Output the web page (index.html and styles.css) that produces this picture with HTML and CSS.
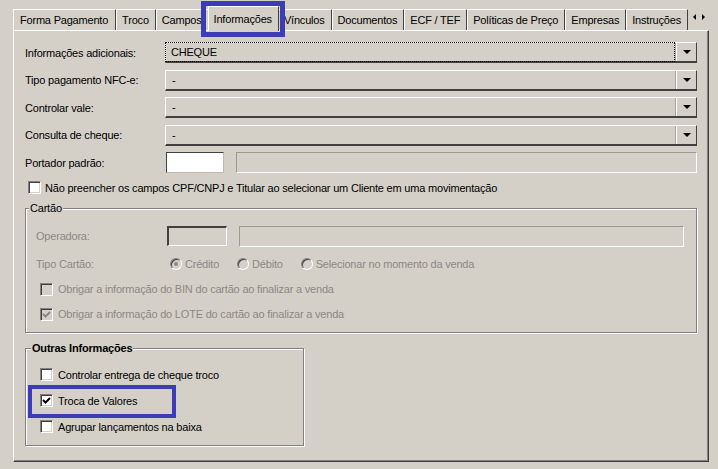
FILE: index.html
```html
<!DOCTYPE html>
<html lang="pt-BR">
<head>
    <meta charset="UTF-8">
    <title>Informações</title>
    <link rel="stylesheet" href="styles.css">
</head>
<body>
<div class="janela">
    <div class="abas">
        <div class="aba">Forma Pagamento</div>
        <div class="aba">Troco</div>
        <div class="aba">Campos</div>
        <div class="aba ativa">Informações</div>
        <div class="aba">Vínculos</div>
        <div class="aba">Documentos</div>
        <div class="aba">ECF / TEF</div>
        <div class="aba">Políticas de Preço</div>
        <div class="aba">Empresas</div>
        <div class="aba">Instruções</div>
        <div class="setas"><span class="seta esq"></span><span class="seta dir"></span></div>
    </div>

    <div class="painel">
        <div class="linhas">
            <div class="linha">
                <label class="rotulo">Informações adicionais:</label>
                <div class="combo foco"><span class="combo-texto">CHEQUE</span><span class="combo-botao"></span></div>
            </div>
            <div class="linha">
                <label class="rotulo">Tipo pagamento NFC-e:</label>
                <div class="combo"><span class="combo-texto">-</span><span class="combo-botao"></span></div>
            </div>
            <div class="linha">
                <label class="rotulo">Controlar vale:</label>
                <div class="combo"><span class="combo-texto">-</span><span class="combo-botao"></span></div>
            </div>
            <div class="linha">
                <label class="rotulo">Consulta de cheque:</label>
                <div class="combo"><span class="combo-texto">-</span><span class="combo-botao"></span></div>
            </div>
            <div class="linha">
                <label class="rotulo">Portador padrão:</label>
                <div class="campo branco"></div>
                <div class="campo vazio"></div>
            </div>
        </div>

        <div class="check-linha topo">
            <span class="caixa"></span>
            <span>Não preencher os campos CPF/CNPJ e Titular ao selecionar um Cliente em uma movimentação</span>
        </div>

        <fieldset class="grupo cartao">
            <legend>Cartão</legend>
            <div class="linha-g">
                <span class="rotulo-g">Operadora:</span>
                <div class="campo escuro"></div>
                <div class="campo vazio"></div>
            </div>
            <div class="linha-g tipo">
                <span class="rotulo-g">Tipo Cartão:</span>
                <span class="opcao"><span class="radio marcado"></span>Crédito</span>
                <span class="opcao"><span class="radio"></span>Débito</span>
                <span class="opcao"><span class="radio"></span>Selecionar no momento da venda</span>
            </div>
            <div class="check-linha">
                <span class="caixa"></span>
                <span>Obrigar a informação do BIN do cartão ao finalizar a venda</span>
            </div>
            <div class="check-linha">
                <span class="caixa"><svg width="11" height="11" viewBox="0 0 11 11"><path d="M2 5 L4.5 7.5 L9 3" fill="none" stroke="#8c8984" stroke-width="2"/></svg></span>
                <span>Obrigar a informação do LOTE do cartão ao finalizar a venda</span>
            </div>
        </fieldset>

        <fieldset class="grupo outras">
            <legend>Outras Informações</legend>
            <div class="check-linha">
                <span class="caixa"></span>
                <span>Controlar entrega de cheque troco</span>
            </div>
            <div class="check-linha">
                <span class="caixa"><svg width="11" height="11" viewBox="0 0 11 11"><path d="M2 5 L4.5 7.5 L9 3" fill="none" stroke="#000" stroke-width="2"/></svg></span>
                <span>Troca de Valores</span>
            </div>
            <div class="check-linha">
                <span class="caixa"></span>
                <span>Agrupar lançamentos na baixa</span>
            </div>
        </fieldset>
    </div>

    <div class="destaque destaque-aba"></div>
    <div class="destaque destaque-troca"></div>
</div>
</body>
</html>
```

FILE: styles.css
```css
body {
    margin: 0;
    background: #d4d0c8;
    font-family: "Liberation Sans", Arial, sans-serif;
    font-size: 11px;
    letter-spacing: -0.2px;
    color: #000;
}
.janela {
    position: relative;
    width: 718px;
    height: 469px;
    padding: 9px 0 0 13px;
    box-sizing: border-box;
    overflow: hidden;
}
.abas {
    display: flex;
    height: 21px;
}
.aba {
    height: 21px;
    line-height: 20px;
    padding: 0 6px 0 5px;
    box-sizing: border-box;
    border-top: 1px solid #fff;
    border-left: 1px solid #fff;
    border-right: 1px solid #404040;
    white-space: nowrap;
}
.aba:first-child {
    padding: 0 7px 0 6px;
}
.aba.ativa {
    position: relative;
    z-index: 1;
    height: 25px;
    margin: -3px -1px 0 -1px;
    padding: 2px 6px 0 5px;
    background: #d4d0c8;
}
.setas {
    display: flex;
    align-items: center;
    gap: 6px;
    margin-left: 5px;
    height: 16px;
}
.seta {
    width: 0;
    height: 0;
    border-top: 3px solid transparent;
    border-bottom: 3px solid transparent;
}
.seta.esq { border-right: 3px solid #000; }
.seta.dir { border-left: 3px solid #000; }

.painel {
    width: 696px;
    height: 432px;
    box-sizing: border-box;
    border-top: 1px solid #fff;
    border-left: 1px solid #fff;
    border-right: 1px solid #404040;
    border-bottom: 1px solid #404040;
    box-shadow: inset -1px -1px 0 #808080;
    padding: 11px 11px 0 11px;
}
.linhas {
    display: flex;
    flex-direction: column;
    gap: 6.5px;
}
.linha {
    display: flex;
    align-items: center;
    height: 21px;
}
.rotulo {
    width: 140px;
    flex-shrink: 0;
}
.combo {
    flex: 1;
    display: flex;
    height: 21px;
    box-sizing: border-box;
    border-top: 1px solid #fff;
    border-left: 1px solid #fff;
    border-right: 1px solid #404040;
    border-bottom: 2px solid #404040;
}
.combo-texto {
    flex: 1;
    padding-left: 6px;
    line-height: 18px;
    margin: 0 2px 0 0;
}
.combo.foco .combo-texto {
    outline: 1px dotted #000;
    padding-left: 5px;
}
.combo-botao {
    width: 19px;
    border-left: 1px solid #fff;
    box-shadow: -1px 0 0 #a8a59e;
    display: flex;
    align-items: center;
    justify-content: center;
}
.combo-botao::after {
    content: "";
    border-left: 4px solid transparent;
    border-right: 4px solid transparent;
    border-top: 4px solid #000;
}
.campo {
    height: 21px;
    box-sizing: border-box;
}
.campo.branco {
    width: 58px;
    margin-left: 1px;
    background: #fff;
    border-top: 1px solid #404040;
    border-left: 1px solid #404040;
    border-right: 1px solid #bdbab3;
    border-bottom: 1px solid #bdbab3;
}
.campo.vazio {
    flex: 1;
    margin-left: 12px;
    border-top: 1px solid #9c9991;
    border-left: 1px solid #9c9991;
    border-right: 1px solid #fff;
    border-bottom: 1px solid #fff;
}
.campo.escuro {
    width: 60px;
    height: 20px;
    border-top: 2px solid #404040;
    border-left: 2px solid #404040;
    border-right: 1px solid #fff;
    border-bottom: 1px solid #fff;
}

.check-linha {
    display: flex;
    align-items: center;
    gap: 5px;
    height: 17px;
}
.check-linha.topo {
    margin: 8px 0 0 3px;
    gap: 4px;
    height: 13px;
}
.caixa {
    width: 13px;
    height: 13px;
    box-sizing: border-box;
    flex-shrink: 0;
    background: #fff;
    border: 1px solid;
    border-color: #808080 #fff #fff #808080;
    box-shadow: inset 1px 1px 0 #404040, inset -1px -1px 0 #d4d0c8;
    display: flex;
    align-items: center;
    justify-content: center;
}
.caixa svg { display: block; }

.grupo {
    position: relative;
    margin: 0;
    border: 1px solid #808080;
    box-shadow: inset 1px 1px 0 #fff, 1px 1px 0 #fff;
}
.grupo legend {
    line-height: 14px;
    padding: 0 1px;
    background: #d4d0c8;
}
.cartao {
    margin-top: 7px;
    padding: 11px 12px 9px 10px;
    color: #8c8984;
}
.cartao legend {
    margin-left: -7px;
    color: #000;
}
.cartao .check-linha {
    margin: 7px 0 0 4px;
    height: 18px;
}
.cartao .caixa {
    background: #d4d0c8;
    box-shadow: inset 1px 1px 0 #404040;
}
.linha-g {
    display: flex;
    align-items: center;
    height: 20px;
}
.rotulo-g {
    width: 131px;
    flex-shrink: 0;
}
.linha-g.tipo {
    margin-top: 9px;
    height: 18px;
}
.linha-g.tipo .rotulo-g {
    width: 134px;
}
.opcao {
    display: flex;
    align-items: center;
    gap: 3px;
    margin-right: 18px;
}
.radio {
    width: 12px;
    height: 12px;
    box-sizing: border-box;
    border-radius: 50%;
    border: 1px solid;
    border-color: #808080 #fff #fff #808080;
    box-shadow: inset 1px 1px 0 #404040;
    display: flex;
    align-items: center;
    justify-content: center;
}
.radio.marcado::after {
    content: "";
    width: 4px;
    height: 4px;
    border-radius: 50%;
    background: #8c8984;
}
.outras {
    width: 279px;
    box-sizing: border-box;
    margin-top: 8px;
    padding: 11px 10px 10px 14px;
}
.outras legend {
    margin-left: -9px;
    font-weight: bold;
}
.outras .check-linha + .check-linha {
    margin-top: 9px;
}

.destaque {
    position: absolute;
    box-sizing: border-box;
    border: 5px solid #3c3cb6;
    z-index: 2;
}
.destaque-aba {
    left: 201px;
    top: 1px;
    width: 84px;
    height: 36px;
}
.destaque-troca {
    left: 28px;
    top: 385px;
    width: 148px;
    height: 33px;
    border-width: 4px;
}
```
